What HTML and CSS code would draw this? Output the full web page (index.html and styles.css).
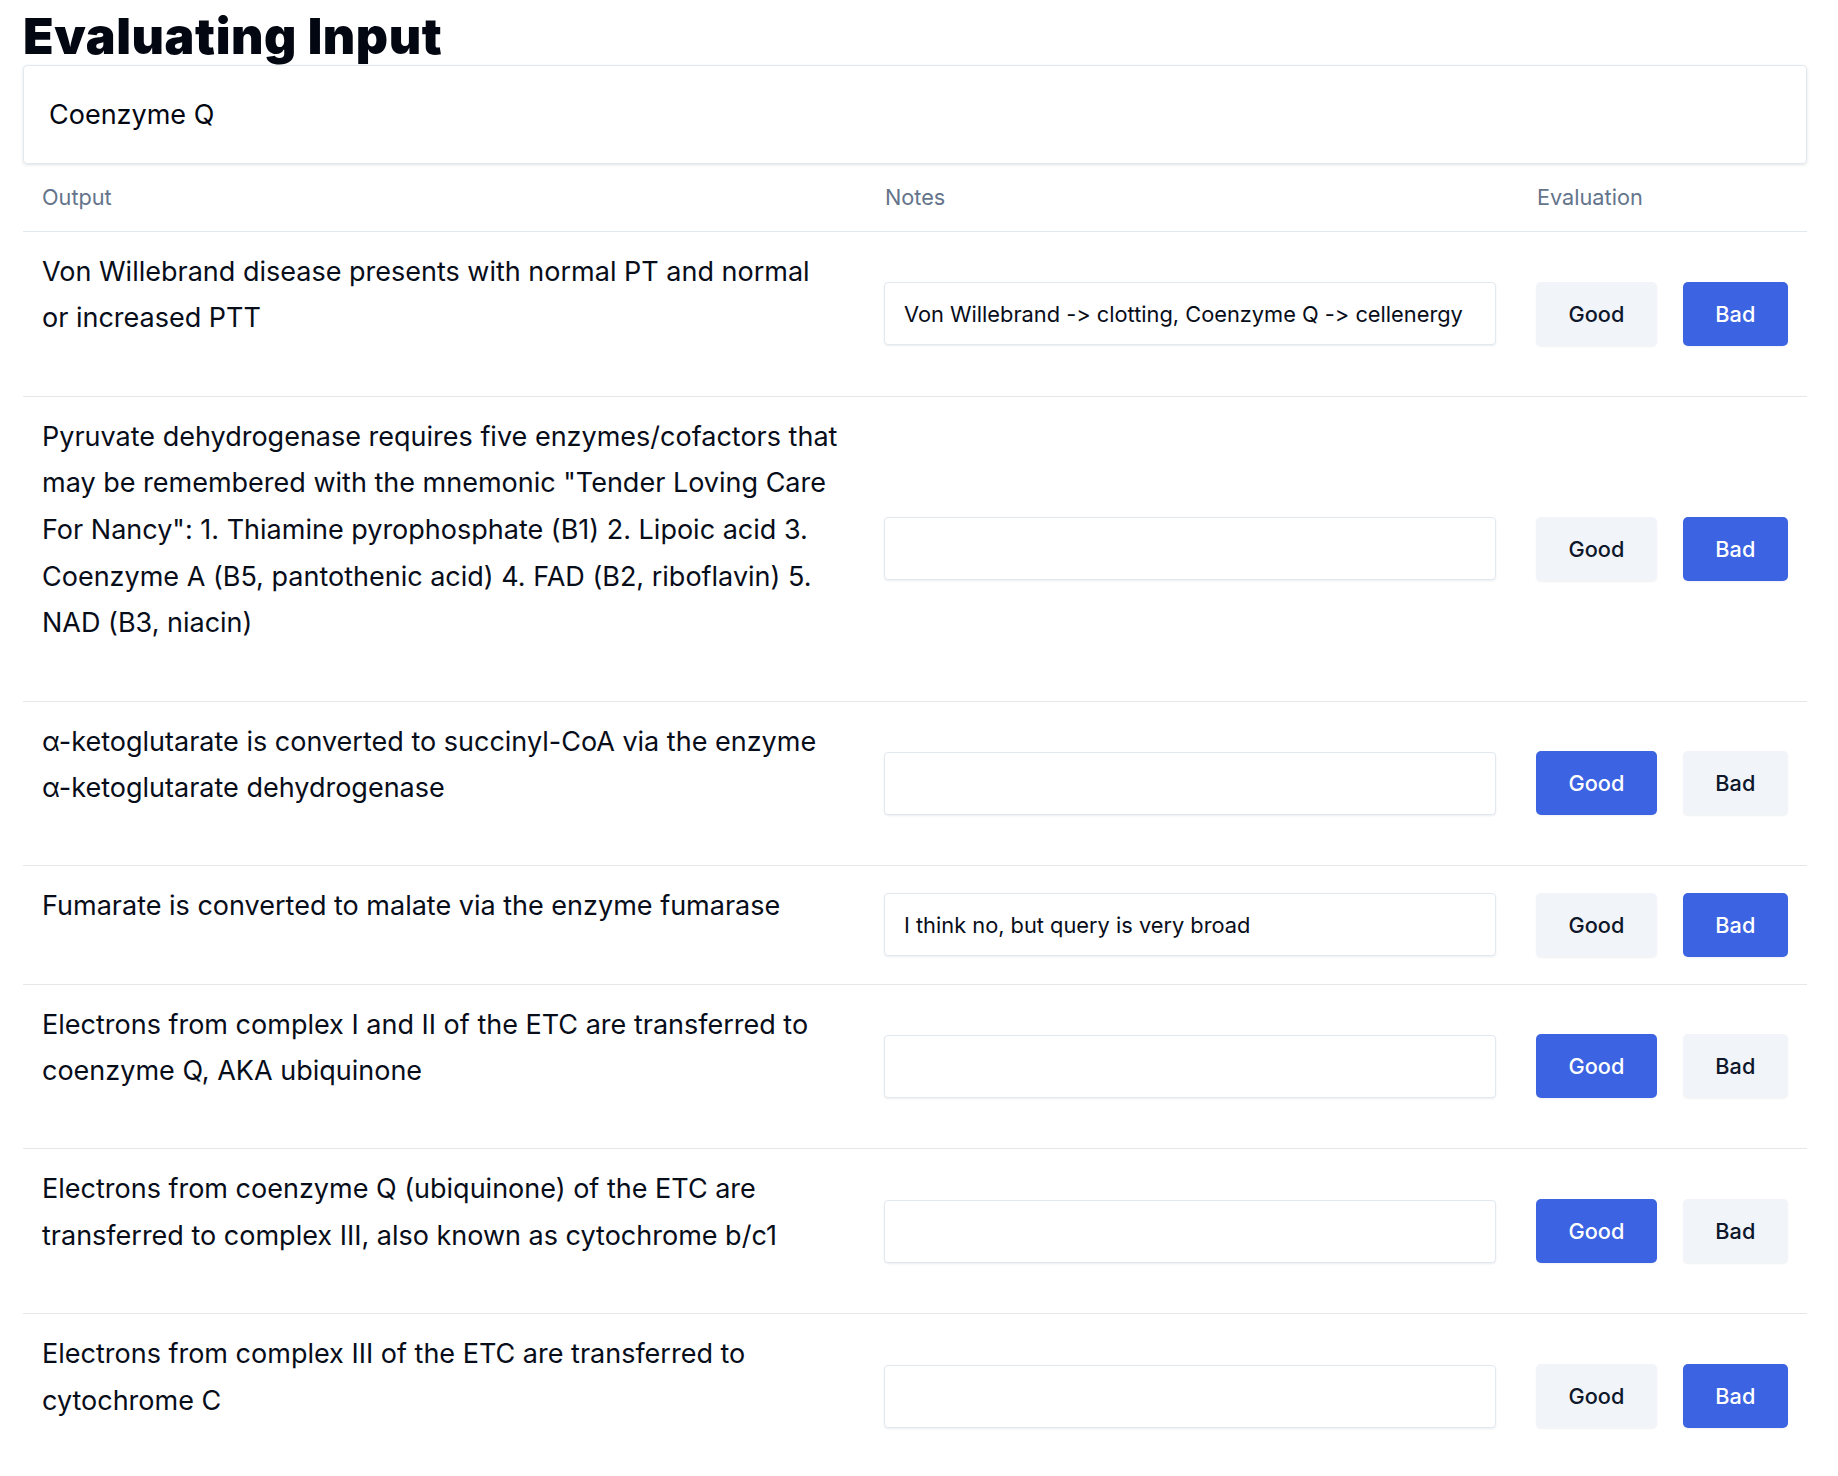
FILE: index.html
```html
<!DOCTYPE html>
<html lang="en">
<head>
<meta charset="utf-8">
<title>Evaluating Input</title>
<link rel="stylesheet" href="styles.css">
</head>
<body>
<main class="page">
  <h1 class="title">Evaluating Input</h1>
  <div class="query-box">Coenzyme Q</div>
  <section class="table">
    <div class="row head">
      <div class="th first">Output</div>
      <div class="th">Notes</div>
      <div class="th">Evaluation</div>
    </div>

    <div class="row">
      <div class="output">Von Willebrand disease presents with normal PT and normal or increased PTT</div>
      <div class="notes"><input class="note-input" type="text" value="Von Willebrand -&gt; clotting, Coenzyme Q -&gt; cellenergy"></div>
      <div class="eval"><button class="btn">Good</button><button class="btn active">Bad</button></div>
    </div>

    <div class="row">
      <div class="output">Pyruvate dehydrogenase requires five enzymes/cofactors that may be remembered with the mnemonic "Tender Loving Care For Nancy": 1. Thiamine pyrophosphate (B1) 2. Lipoic acid 3. Coenzyme A (B5, pantothenic acid) 4. FAD (B2, riboflavin) 5. NAD (B3, niacin)</div>
      <div class="notes"><input class="note-input" type="text" value=""></div>
      <div class="eval"><button class="btn">Good</button><button class="btn active">Bad</button></div>
    </div>

    <div class="row">
      <div class="output"><span class="nw">α-ketoglutarate</span> is converted to succinyl-CoA via the enzyme <span class="nw">α-ketoglutarate</span> dehydrogenase</div>
      <div class="notes"><input class="note-input" type="text" value=""></div>
      <div class="eval"><button class="btn active">Good</button><button class="btn">Bad</button></div>
    </div>

    <div class="row">
      <div class="output">Fumarate is converted to malate via the enzyme fumarase</div>
      <div class="notes"><input class="note-input" type="text" value="I think no, but query is very broad"></div>
      <div class="eval"><button class="btn">Good</button><button class="btn active">Bad</button></div>
    </div>

    <div class="row">
      <div class="output">Electrons from complex I and II of the ETC are transferred to coenzyme Q, AKA ubiquinone</div>
      <div class="notes"><input class="note-input" type="text" value=""></div>
      <div class="eval"><button class="btn active">Good</button><button class="btn">Bad</button></div>
    </div>

    <div class="row">
      <div class="output">Electrons from coenzyme Q (ubiquinone) of the ETC are transferred to complex III, also known as cytochrome b/c1</div>
      <div class="notes"><input class="note-input" type="text" value=""></div>
      <div class="eval"><button class="btn active">Good</button><button class="btn">Bad</button></div>
    </div>

    <div class="row">
      <div class="output">Electrons from complex III of the ETC are transferred to cytochrome C</div>
      <div class="notes"><input class="note-input" type="text" value=""></div>
      <div class="eval"><button class="btn">Good</button><button class="btn active">Bad</button></div>
    </div>
  </section>
</main>
</body>
</html>
```

FILE: styles.css
```css
* {
  box-sizing: border-box;
}

html, body {
  margin: 0;
  padding: 0;
  background: #ffffff;
}

body {
  font-family: Inter, "Noto Sans", "Liberation Sans", sans-serif;
  font-feature-settings: "calt" 0;
  color: #0f172a;
}

.page {
  padding: 8px 31px 0 23px;
}

.title {
  margin: 0;
  font-size: 50px;
  line-height: 56.5px;
  font-weight: 900;
  letter-spacing: 0.6px;
  color: #030712;
}

.query-box {
  border: 1px solid #e2e8f0;
  border-radius: 4px;
  box-shadow: 0 1px 3px rgba(15, 23, 42, 0.12);
  padding: 30px 25px;
  font-size: 27px;
  line-height: 37.3px;
  color: #030712;
}

.row {
  display: grid;
  grid-template-columns: 841px 652px 1fr;
  border-bottom: 1px solid #e5e7eb;
}

.row.head {
  border-bottom-color: #e2e8f0;
}

.th {
  padding: 17.5px 20px 17.5px 21px;
  font-size: 21.7px;
  line-height: 32px;
  color: #64748b;
}

.th.first {
  padding-left: 19px;
}

.output {
  padding: 17px 24px 53.5px 19px;
  font-size: 27px;
  line-height: 46.67px;
  color: #080d1a;
}

.nw {
  white-space: nowrap;
}

.notes {
  align-self: center;
  padding: 0 20px;
}

.note-input {
  display: block;
  width: 100%;
  height: 63px;
  margin: 0;
  padding: 0 19px;
  border: 1px solid #e2e8f0;
  border-radius: 4px;
  box-shadow: 0 1px 2px rgba(15, 23, 42, 0.08);
  font-family: Inter, "Noto Sans", "Liberation Sans", sans-serif;
  font-feature-settings: "calt" 0;
  font-size: 21.8px;
  color: #080d1a;
  background: #ffffff;
  outline: none;
}

.eval {
  align-self: center;
  display: flex;
  gap: 26px;
  padding: 0 20px;
}

.btn {
  height: 64px;
  padding: 0 32.5px;
  border: 0;
  border-radius: 5px;
  background: #f1f4f9;
  box-shadow: 0 1px 2px rgba(15, 23, 42, 0.06);
  font-family: Inter, "Noto Sans", "Liberation Sans", sans-serif;
  font-size: 21.7px;
  font-weight: 500;
  line-height: 32px;
  color: #0f172a;
  cursor: pointer;
}

.btn.active {
  background: #3b63e2;
  color: #ffffff;
}
```
